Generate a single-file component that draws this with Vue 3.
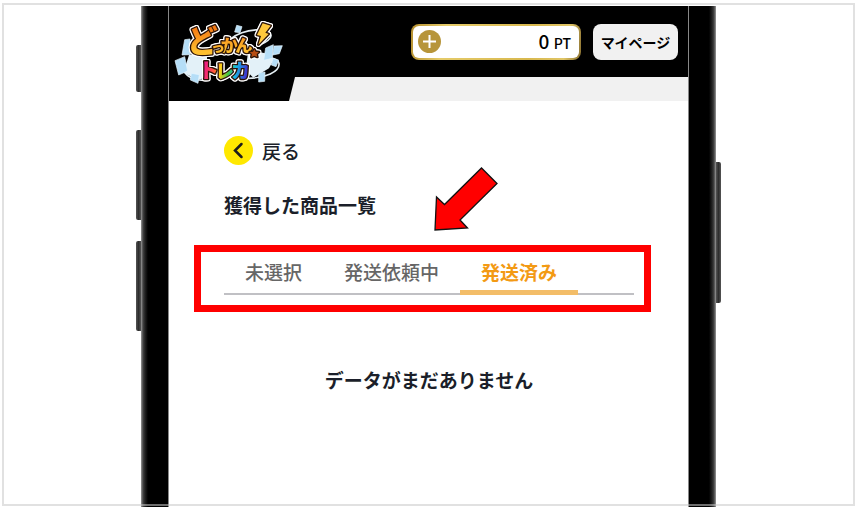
<template>
  <div class="page">
    <div class="frame">
      <div class="phone">
        <span
          v-for="key in sideKeys"
          :key="key"
          class="side-key"
          :class="key"
        ></span>

        <div class="screen">
          <header class="header">
            <a class="logo" href="#" aria-label="どっかん！トレカ">
              <svg viewBox="24 54 333 204" width="111" height="68">
                <defs>
                  <linearGradient id="orange" x1="0" y1="75" x2="0" y2="165" gradientUnits="userSpaceOnUse">
                    <stop offset="0.1" stop-color="#f47a14" />
                    <stop offset="0.9" stop-color="#ffc030" />
                  </linearGradient>
                  <linearGradient id="rainbow" x1="112" y1="185" x2="252" y2="210" gradientUnits="userSpaceOnUse">
                    <stop offset="0.05" stop-color="#ed1689" />
                    <stop offset="0.28" stop-color="#ff5a3b" />
                    <stop offset="0.4" stop-color="#ffcf16" />
                    <stop offset="0.58" stop-color="#43c844" />
                    <stop offset="0.72" stop-color="#16b9e8" />
                    <stop offset="0.95" stop-color="#3f39cf" />
                  </linearGradient>
                </defs>
                <path
                  d="M195 118C240 82 316 82 318 106C319 116 303 128 287 133M250 235C300 234 345 216 342 190C338 174 305 170 280 169M60 218C70 235 98 242 125 241"
                  fill="none"
                  stroke="#e4eef3"
                  stroke-width="5"
                />
                <path
                  d="M72 165L125 158L130 230L99 240L55 218ZM250 150L312 162L326 180L312 205L265 233L242 210Z"
                  fill="#e3f1f8"
                />
                <g fill="#b5def7" stroke="#e7f6ff" stroke-width="2">
                  <path d="M30 182L59 170L68 213L41 225Z" />
                  <path d="M59 119L75 117L76 164L51 165Z" />
                  <path d="M302 144L325 134L322 175L296 181Z" />
                  <path d="M327 138L352 137L343 161L323 165Z" />
                  <path d="M324 175L341 180L333 200L319 195Z" />
                  <path d="M281 219L300 216L299 244L281 246Z" />
                  <path d="M215 76L231 80L225 98L209 96Z" />
                  <path d="M79 220L103 224L99 250L76 240Z" />
                </g>
                <g class="lettering">
                  <text
                    v-for="c in logoChars"
                    :key="c.char"
                    :x="c.x"
                    :y="c.y"
                    :font-size="c.size"
                    :fill="`url(#${c.fill})`"
                  >{{ c.char }}</text>
                  <path
                    d="M293 70L317 77L301 98L311 102L280 134L288 108L276 105Z"
                    fill="#ffc83c"
                  />
                  <path
                    d="M268 148L272 155L282 156L275 162L277 171L268 167L259 171L261 162L254 156L264 155Z"
                    fill="#b94d12"
                  />
                </g>
              </svg>
            </a>
            <div class="points">
              <button class="charge" type="button" aria-label="ポイント購入">
                <svg viewBox="0 0 23 23" width="23" height="23">
                  <circle cx="11.5" cy="11.5" r="11.5" fill="#b7953a" />
                  <path d="M11.5 5v13M5 11.5h13" stroke="#fff" stroke-width="2" />
                </svg>
              </button>
              <span class="amount">0 <small>PT</small></span>
            </div>
            <button class="mypage" type="button">マイページ</button>
          </header>
          <div class="stripe"></div>

          <main class="content">
            <a class="back" href="#">
              <svg viewBox="0 0 29 29" width="29" height="29">
                <circle cx="14.5" cy="14.5" r="14.5" fill="#ffe800" />
                <path
                  d="M17.5 8L11 14.5L17.5 21"
                  fill="none"
                  stroke="#1c1c1c"
                  stroke-width="2.5"
                  stroke-linecap="round"
                />
              </svg>
              戻る
            </a>
            <h1 class="title">獲得した商品一覧</h1>

            <div class="tabs-area">
              <nav class="tabs">
                <button
                  v-for="tab in tabs"
                  :key="tab"
                  type="button"
                  class="tab"
                  :class="{ active: tab === current }"
                  @click="current = tab"
                >
                  {{ tab }}
                </button>
              </nav>
              <div class="highlight"></div>
              <svg class="arrow" viewBox="0 0 64 64" width="64" height="64">
                <path
                  d="M1 63L2.500 30L10.500 37.500L47.500 1L63 16.500L26 53L33.500 61Z"
                  fill="#f00"
                  stroke="#111"
                  stroke-width="1.3"
                />
              </svg>
            </div>

            <p class="empty">データがまだありません</p>
          </main>
        </div>
      </div>
    </div>
  </div>
</template>

<script setup>
import { ref } from "vue";

const tabs = ["未選択", "発送依頼中", "発送済み"];
const current = ref("発送済み");

const sideKeys = ["mute", "volume-up", "volume-down", "power"];

const logoChars = [
  { char: "ト", x: 100, y: 235, size: 62, fill: "rainbow" },
  { char: "レ", x: 151, y: 234, size: 56, fill: "rainbow" },
  { char: "カ", x: 198, y: 233, size: 57, fill: "rainbow" },
  { char: "ど", x: 66, y: 156, size: 92, fill: "orange" },
  { char: "か", x: 167, y: 156, size: 52, fill: "orange" },
  { char: "ん", x: 211, y: 155, size: 52, fill: "orange" },
  { char: "っ", x: 138, y: 156, size: 42, fill: "orange" },
];
</script>

<style>
body {
  margin: 0;
  background: #fff;
}
</style>

<style scoped>
.page {
  box-sizing: border-box;
  min-height: 100vh;
  padding: 3px 4px 3px 2px;
  display: flex;
  overflow: hidden;
  color: #1b1f2a;
  font-family: "Noto Sans CJK JP", sans-serif;
  font-size: 19px;
  font-weight: 500;
  line-height: 28px;
}

.frame {
  position: relative;
  flex: 1;
  display: flex;
  justify-content: center;
}

/* thin border that runs over the bottom of the phone */
.frame::after {
  content: "";
  position: absolute;
  inset: 0;
  border: 2px solid rgba(200, 200, 200, 0.55);
  pointer-events: none;
}

.phone {
  position: relative;
  box-sizing: border-box;
  display: flex;
  width: 100%;
  max-width: 575px;
  margin: 3px 0 -1px;
  padding: 0 27px;
  background: linear-gradient(
    to right,
    #999 0,
    #444 2px,
    #222 4px,
    #000 7px,
    #000 calc(100% - 7px),
    #222 calc(100% - 4px),
    #444 calc(100% - 2px),
    #999 100%
  );
}

.side-key {
  position: absolute;
  left: -5px;
  width: 5px;
  height: 90px;
  border-radius: 2px 0 0 2px;
  background: linear-gradient(to right, #555, #2e2e2e 50%, #555);
}

.mute {
  top: 39px;
  height: 47px;
}

.volume-up {
  top: 124px;
}

.volume-down {
  top: 235px;
}

.power {
  top: 156px;
  left: 100%;
  height: 141px;
  border-radius: 0 2px 2px 0;
}

.screen {
  flex: 1;
  min-width: 0;
  border: solid #888;
  border-width: 0 1px;
  background: #fff;
}

.header {
  position: relative;
  box-sizing: border-box;
  display: flex;
  align-items: center;
  justify-content: flex-end;
  gap: 12px;
  height: 71px;
  padding: 0 10px;
  background: #000;
}

.logo {
  position: absolute;
  top: 12px;
  left: 4px;
  z-index: 1;
}

.logo svg {
  display: block;
  overflow: visible;
}

.lettering {
  font-weight: 900;
  stroke: #2b1307;
  stroke-width: 8px;
  stroke-linejoin: round;
  paint-order: stroke;
  filter: drop-shadow(3px 0 0 #fff) drop-shadow(-3px 0 0 #fff)
    drop-shadow(0 3px 0 #fff) drop-shadow(0 -3px 0 #fff);
}

.points {
  box-sizing: border-box;
  display: flex;
  align-items: center;
  justify-content: space-between;
  width: 170px;
  height: 36px;
  padding: 0 8px 0 5px;
  border: 2px solid transparent;
  border-radius: 8px;
  background:
    linear-gradient(#fff, #fff) padding-box,
    linear-gradient(100deg, #b48e2e, #e5cb6a 20%, #d8b84e 70%, #e0c566 90%, #8a7030) border-box;
  color: #000;
}

.charge {
  display: flex;
  padding: 0;
  border: 0;
  background: none;
}

.amount small {
  font-size: 14px;
}

.mypage {
  width: 85px;
  height: 36px;
  padding: 0;
  border: 0;
  border-radius: 8px;
  background: #f1f1f1;
  color: #000;
  font: inherit;
  font-size: 14px;
  font-weight: 700;
}

.stripe {
  height: 24px;
  background: #f1f1f1;
}

.stripe::before {
  content: "";
  display: block;
  width: 126px;
  height: 100%;
  background: #000;
  clip-path: polygon(0 0, 100% 0, 120px 100%, 0 100%);
}

.content {
  padding: 35px 54px 40px 55px;
}

.back {
  display: flex;
  align-items: center;
  gap: 9px;
  height: 29px;
  color: inherit;
  text-decoration: none;
}

.title {
  margin: 26px 0 0;
  font-size: inherit;
  font-weight: 700;
}

.tabs-area {
  position: relative;
  margin-top: 27px;
}

.tabs {
  display: flex;
  box-shadow: inset 0 -2px #c0c0c4;
}

.tab {
  padding: 12px 21px 4px;
  border: 0;
  border-bottom: 5px solid transparent;
  background: none;
  color: #666;
  font: inherit;
  white-space: nowrap;
  cursor: pointer;
}

.tab.active {
  border-color: #f3bd68;
  color: #f39a14;
  font-weight: 700;
}

.highlight {
  position: absolute;
  inset: -1px -17px -17px -30px;
  border: 7px solid #f00;
  pointer-events: none;
}

.arrow {
  position: absolute;
  top: -79px;
  left: 210px;
}

.empty {
  margin: 71px 0 0;
  font-weight: 700;
  text-align: center;
}
</style>
